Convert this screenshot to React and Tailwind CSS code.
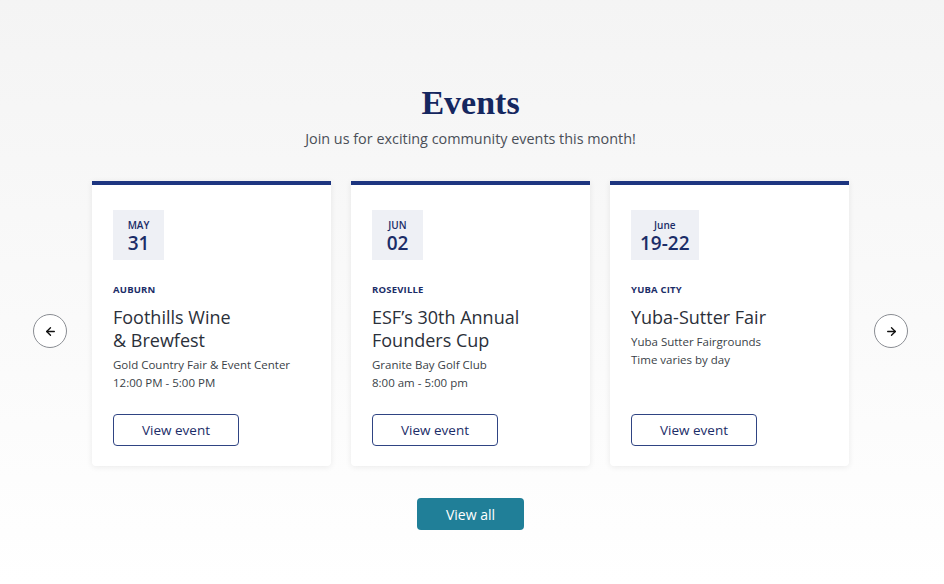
import { FiArrowLeft, FiArrowRight } from 'react-icons/fi';

const events = [
    {
        month: 'MAY',
        day: '31',
        city: 'AUBURN',
        title: ['Foothills Wine', '& Brewfest'],
        venue: 'Gold Country Fair & Event Center',
        time: '12:00 PM - 5:00 PM',
    },
    {
        month: 'JUN',
        day: '02',
        city: 'ROSEVILLE',
        title: ['ESF’s 30th Annual', 'Founders Cup'],
        venue: 'Granite Bay Golf Club',
        time: '8:00 am - 5:00 pm',
    },
    {
        month: 'June',
        day: '19-22',
        city: 'YUBA CITY',
        title: ['Yuba-Sutter Fair'],
        venue: 'Yuba Sutter Fairgrounds',
        time: 'Time varies by day',
    },
];

const EventCard = ({ event }) => (
    <div className="flex w-[239px] flex-col rounded-b-[4px] border-t-4 border-[#1d3580] bg-white px-[21px] pt-[25px] pb-[20px] shadow-[0_1px_6px_rgba(0,0,0,0.08)]">
        <div className="flex min-w-[51px] flex-col items-center self-start bg-[#eef0f5] px-[9px] pt-[8px] pb-[6px] text-[#1b2d68]">
            <span className="text-[10px] leading-[14px] font-semibold">{event.month}</span>
            <span className="text-[19px] leading-[22px] font-semibold">{event.day}</span>
        </div>
        <div className="mt-[23px] text-[9.5px] leading-[14px] font-bold tracking-[0.2px] text-[#1b2d68]">{event.city}</div>
        <div className="mt-[9px] text-[18px] leading-[23px] font-medium text-[#2b303a]">
            {event.title.map((line) => (
                <div key={line}>{line}</div>
            ))}
        </div>
        <div className="mt-[4px] text-[11.5px] leading-[18px] text-[#3a3f48]">
            <div>{event.venue}</div>
            <div>{event.time}</div>
        </div>
        <div className="mt-auto pt-[22px]">
            <button
                type="button"
                className="h-[32px] w-[126px] rounded-[4px] border border-[#2f4483] text-[13.5px] font-medium text-[#1b2d68]"
            >
                View event
            </button>
        </div>
    </div>
);

const ArrowButton = ({ children }) => (
    <button
        type="button"
        className="mt-[15px] flex h-[34px] w-[34px] shrink-0 items-center justify-center rounded-full border border-[#8a8d93] bg-white text-[13px] text-[#111]"
    >
        {children}
    </button>
);

export default function App() {
    return (
        <div
            className="flex min-h-[584px] w-full flex-col items-center bg-gradient-to-b from-[#f4f4f4] to-[#ffffff] pt-[83px] pr-[3px] pb-[54px]"
            style={{ fontFamily: '"Open Sans", "Liberation Sans", sans-serif' }}
        >
            <h2
                className="text-[34px] leading-[40px] font-bold text-[#15275f]"
                style={{ fontFamily: '"Liberation Serif", "DejaVu Serif", serif' }}
            >
                Events
            </h2>
            <p className="mt-[5px] text-[14.4px] leading-[22px] text-[#4a4f58]">Join us for exciting community events this month!</p>

            <div className="mt-[31px] flex items-center gap-[25px]">
                <ArrowButton>
                    <FiArrowLeft strokeWidth={2.5} />
                </ArrowButton>
                <div className="flex items-stretch gap-[20px]">
                    {events.map((event) => (
                        <EventCard key={event.city} event={event} />
                    ))}
                </div>
                <ArrowButton>
                    <FiArrowRight strokeWidth={2.5} />
                </ArrowButton>
            </div>

            <button
                type="button"
                className="mt-[32px] h-[32px] w-[107px] rounded-[4px] bg-[#207f98] text-[14px] font-medium text-white"
            >
                View all
            </button>
        </div>
    );
}
